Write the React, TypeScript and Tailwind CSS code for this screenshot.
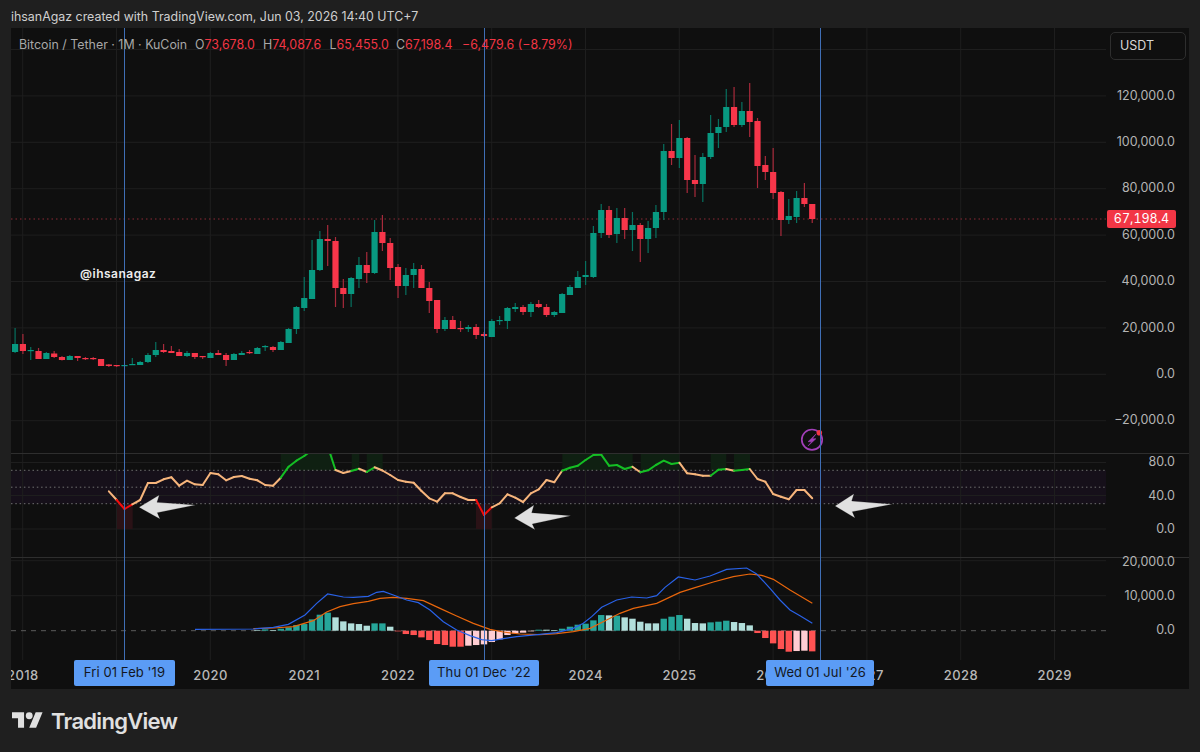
const X = (i: number) => 124.5 + (i - 14) * 7.815;

// [isGreen, bodyTop, bodyBottom, wickTop, wickBottom]
const candles: number[][] = [
  [1,344,352,328,353],[0,344,351,334,354],[1,350,351,347,360],[0,351,359,348,359],[1,353,359,352,359],
  [0,353.5,357,351,358],[0,357,360,356,360.5],[1,356,360,355,360],[0,356,358,356,361],[0,358,359,357,360],
  [0,358,359,357,360],[0,359,366,359,366],[0,364.5,366,364,367],[0,365,366,365,367],[1,365,366,365,366],
  [1,364,365,358,365],[1,362,365,361,365],[1,355,362,353,363],[1,350,355,342,357],[0,350,352,344,353],
  [0,351,353,346,353],[0,352,356,349,356],[1,353,356,351,357],[0,353,357,353,359],[0,356,357,356,359],
  [1,353,358,352,358],[0,353,355,350,355],[0,355,360,353,366],[1,354,360,353,360],[1,353,355,351,355],
  [0,352,353,350,354],[1,348,354,347,354],[1,346,347,345,351],[0,347,350,346,352],[1,342,350,341,350],
  [1,329,343,328,343],[1,307,329,306,334],[1,298,308,277,311],[1,270,299,240,299],[1,239,270,231,271],
  [0,239,241,225,266],[0,241,288,237,307],[0,288,294,279,308],[1,278,294,277,307],[1,265,279,257,288],
  [0,265,273,252,283],[1,232,273,220,274],[0,232,243,215,251],[0,243,268,238,280],[0,267,286,264,298],
  [1,275,286,268,295],[1,269,275,263,288],[0,269,288,265,288],[0,288,301,282,313],[0,300,329,300,333],
  [1,320,329,317,331],[0,320,329,316,329],[0,328,329,321,332],[1,327,329,325,332],[0,327,335,324,339],
  [0,334,336,332,337],[1,321,337,319,337],[1,320,321,316,325],[1,308,321,307,329],[1,307,309,303,312],
  [0,307,312,305,315],[1,304,312,302,317],[0,304,307,300,308],[0,307,315,304,317],[1,312,315,311,317],
  [1,294,313,293,313],[1,287,295,285,295],[1,277,288,271,288],[1,275,277,261,285],[1,233,277,226,278],
  [1,210,233,204,238],[0,210,235,206,238],[1,218,234,208,243],[0,218,230,208,239],[1,225,230,212,251],
  [0,225,239,223,262],[1,228,239,221,253],[1,212,228,205,238],[1,151,212,144,220],[0,151,158,124,165],
  [1,138,158,120,168],[0,138,180,137,193],[0,180,184,155,197],[1,157,184,153,202],[1,133,157,115,159],
  [1,127,133,119,148],[1,107,127,89,132],[0,107,125,87,127],[1,111,125,102,127],[0,111,122,83,137],
  [0,121,166,118,188],[0,165,172,156,180],[0,172,193,148,199],[0,192,220,191,236],[1,216,220,199,224],
  [1,198,217,191,223],[0,198,204,183,207],[0,204,219,204,223],
];

// RSI y values from i = 12
const rsi: number[] = [
  491.3,500,509,504.3,500,483,483,479.3,477.3,485.7,480.7,484.3,485,473,474.3,480.3,477,476,478.7,480.3,485,485.7,
  477.7,466.7,460.7,456,450,446,446,470,473,471,468.7,472,467.3,470.5,475,480,481.7,482.7,491,498.3,501.7,493.3,
  493.3,497,500,500,515,507.3,503.3,494.3,497.7,502,493.3,489.3,480,482.3,470.7,467.7,465.7,460,455,454.7,465.7,
  465,469,466.7,472.3,470.3,465,460.7,464,462.7,473.3,474.3,475.7,475.7,469.7,469,470.7,470,469,479,481.7,494,
  496.7,499.3,490,490,498.3,
];

// Histogram: bar end relative to the zero line, measured at 3x, and colour, from i = 31
const hist: [number, string][] = [
  [-2,"l"],[-4,"t"],[-2,"l"],[-6,"t"],[-10,"t"],[-17,"t"],[-20,"t"],[-34,"t"],[-48,"t"],[-54,"t"],[-40,"l"],
  [-28,"l"],[-22,"l"],[-20,"l"],[-15,"l"],[-22,"t"],[-22,"t"],[-12,"l"],[2,"r"],[10,"r"],[13,"r"],[20,"r"],[28,"r"],
  [40,"r"],[43,"r"],[48,"r"],[48,"r"],[45,"p"],[43,"p"],[41,"p"],[34,"p"],[26,"p"],[13,"p"],[8,"p"],[6,"p"],[2,"p"],
  [-3,"t"],[-3,"l"],[-2,"l"],[-6,"t"],[-12,"t"],[-18,"t"],[-21,"t"],[-31,"t"],[-47,"t"],[-46,"l"],[-45,"t"],
  [-40,"l"],[-36,"l"],[-27,"l"],[-22,"l"],[-22,"l"],[-36,"t"],[-42,"t"],[-47,"t"],[-36,"l"],[-23,"l"],[-22,"l"],
  [-25,"t"],[-27,"t"],[-30,"t"],[-26,"l"],[-23,"l"],[-16,"l"],[7,"r"],[22,"r"],[38,"r"],[55,"r"],[63,"r"],[61,"p"],
  [60,"p"],[62,"r"],
];

const histColor: Record<string, string> = { t: "#26a69a", l: "#b2dfdb", r: "#ff5252", p: "#ffcdd2" };

const z7 = (p: number[][]) => p.map(([x, y]) => `${180 + x / 3},${580 + y / 3}`).join(" ");
const z8 = (p: number[][]) => p.map(([x, y]) => `${540 + x / 3},${560 + y / 3}`).join(" ");

const macdBlue =
  z7([[45,148],[220,147],[280,142],[325,133],[375,105],[410,70],[443,42],[490,51],[520,52],[565,49],[590,37],[610,34],[640,45],[680,60],[715,68],[750,90],[790,125],[830,150],[870,167],[905,179],[935,182],[975,175],[1010,170],[1080,163]]) +
  " " +
  z8([[50,218],[100,205],[130,190],[155,170],[185,142],[230,120],[275,111],[320,114],[350,107],[375,82],[415,51],[465,60],[510,48],[560,28],[620,24],[650,42],[690,85],[720,120],[750,150],[780,167],[817,190]]);
const macdOrange =
  z7([[220,146],[280,144],[340,140],[400,122],[440,96],[480,80],[520,71],[565,64],[600,55],[640,52],[680,55],[730,62],[780,85],[830,108],[880,130],[930,148],[970,156],[1020,162],[1080,164]]) +
  " " +
  z8([[50,221],[100,215],[150,205],[200,180],[240,160],[280,145],[350,130],[420,97],[465,83],[520,66],[580,50],[630,42],[665,46],[700,58],[750,90],[817,130]]);

const yearLines = [22.7,116.5,210.3,304.1,397.9,491.7,585.5,679.3,773.1,866.9,960.7,1054.5];
const years = ["2018","","2020","2021","2022","","2024","2025","2026","2027","2028","2029"];

function YearGrid({ y1, y2 }: { y1: number; y2: number }) {
  return (
    <>
      {yearLines.map((x) => (
        <line key={x} x1={x} x2={x} y1={y1} y2={y2} stroke="#1e1e1e" strokeWidth={1} />
      ))}
    </>
  );
}

function HLines({ ys }: { ys: number[] }) {
  return (
    <>
      {ys.map((y) => (
        <line key={y} x1={11} x2={1106} y1={y} y2={y} stroke="#1e1e1e" strokeWidth={1} />
      ))}
    </>
  );
}

function MainPane() {
  return (
    <svg viewBox="11 28 1095 425" className="block w-[1095px] h-[425px] shrink-0">
      <YearGrid y1={28} y2={453} />
      <HLines ys={[49.5,95.9,142.3,188.7,235.1,281.5,327.9,374.3,420.7]} />
      <line x1={11} x2={1106} y1={219} y2={219} stroke="#8c2a36" strokeWidth={1} strokeDasharray="1.5 3" />
      {candles.map((c, i) => {
        const x = X(i);
        return (
          <g key={i}>
            <rect x={x - 0.6} y={c[3]} width={1.2} height={c[4] - c[3]} fill={c[0] ? "#07705f" : "#a82a3b"} />
            <rect x={x - 3.1} y={c[1]} width={6.2} height={Math.max(c[2] - c[1], 1.2)} fill={c[0] ? "#089981" : "#f7364a"} />
          </g>
        );
      })}
      <circle cx={812} cy={439.7} r={10.2} fill="none" stroke="#a23fb8" strokeWidth={1.7} />
      <path d="M816 434 L808 441.7 H811.6 L808 446 L816 438.7 H812.4 Z" fill="#a23fb8" stroke="#a23fb8" strokeWidth={0.5} />
      <circle cx={819.3} cy={432.7} r={2.8} fill="#f23645" />
    </svg>
  );
}

function RsiPane() {
  const pts = rsi.map((y, k) => ({ x: X(k + 12), y }));
  return (
    <svg viewBox="11 454 1095 103" className="block w-[1095px] h-[103px] shrink-0">
      <defs>
        <clipPath id="rsiclip">
          <rect x={11} y={454} width={1095} height={103} />
        </clipPath>
      </defs>
      <rect x={11} y={470.3} width={1095} height={33.4} fill="#16101a" />
      <YearGrid y1={454} y2={557} />
      <HLines ys={[462.5,495.5,529]} />
      {[[280.7,333],[351.7,359.3],[366.7,382.7],[562.3,632.7],[640.7,679.3],[710.7,726.3],[734,750]].map(([a, b]) => (
        <rect key={a} x={a} y={454} width={b - a} height={16.3} fill="#0f2012" />
      ))}
      {[[117,132.7],[476,491.7]].map(([a, b]) => (
        <rect key={a} x={a} y={504} width={b - a} height={25} fill="#2a1216" />
      ))}
      {[470.3,487.2,503.7].map((y) => (
        <line key={y} x1={11} x2={1106} y1={y} y2={y} stroke="#707070" strokeWidth={1} strokeDasharray="1.5 2.8" />
      ))}
      <g clipPath="url(#rsiclip)">
        {pts.slice(1).map((p, k) => {
          const color = p.y <= 470.4 ? "#14bf24" : p.y >= 503.7 ? "#f40d0d" : "#f7b57c";
          return (
            <line key={k} x1={pts[k].x} y1={pts[k].y} x2={p.x} y2={p.y} stroke={color} strokeWidth={2} strokeLinecap="round" />
          );
        })}
      </g>
    </svg>
  );
}

function MacdPane() {
  return (
    <svg viewBox="11 558 1095 102" className="block w-[1095px] h-[102px] shrink-0">
      <YearGrid y1={558} y2={660} />
      <HLines ys={[560.7,595.7]} />
      <line x1={11} x2={1106} y1={630.7} y2={630.7} stroke="#5c5c5c" strokeWidth={1} strokeDasharray="5 5" />
      {hist.map(([v, c], k) => {
        const x = X(k + 31);
        const h = Math.abs(v) / 3;
        const top = v < 0 ? 630.7 - h : 630.7;
        return <rect key={k} x={x - 3.2} y={top} width={6.4} height={h} fill={histColor[c]} />;
      })}
      <polyline points={macdOrange} fill="none" stroke="#e8660c" strokeWidth={1.2} />
      <polyline points={macdBlue} fill="none" stroke="#2962e8" strokeWidth={1.2} />
    </svg>
  );
}

function AxisLabels({ items, rowH }: { items: string[]; rowH: string }) {
  return (
    <>
      {items.map((t) => (
        <div key={t} className={`${rowH} flex items-center justify-end pr-[14px]`}>
          {t}
        </div>
      ))}
    </>
  );
}

function Tag({ className, text }: { className: string; text: string }) {
  return (
    <div className={`absolute top-0 h-[26px] flex items-center justify-center rounded-[2px] bg-[#5b9cf6] text-[13px] tracking-[0.1px] text-[#131722] whitespace-nowrap ${className}`}>
      {text}
    </div>
  );
}

const blue = "absolute top-0 w-[1.2px] h-[632px] bg-[#3f6eb5]";
const red = "text-[#f23645]";

export default function App() {
  return (
    <div className="w-[1200px] h-[752px] bg-[#1f1f1f] flex flex-col overflow-hidden font-['Inter','Liberation_Sans',sans-serif]">
      <div className="h-[28px] shrink-0 pt-[6px] px-[11px] flex items-center text-[12.4px] text-[#cfcfcf] whitespace-nowrap">
        ihsanAgaz created with TradingView.com, Jun 03, 2026 14:40 UTC+7
      </div>

      <div className="relative mx-[11px] w-[1178px] h-[661px] shrink-0 flex flex-col bg-[#0f0f0f] overflow-hidden">
        <div className="flex h-[426px] shrink-0 border-b border-[#2e2e2e]">
          <MainPane />
          <div className="relative flex-1 pt-[44.8px] text-[12.5px] text-[#b4b4b4]">
            <AxisLabels
              rowH="h-[46.4px]"
              items={["120,000.0","100,000.0","80,000.0","60,000.0","40,000.0","20,000.0","0.0","−20,000.0"]}
            />
            <div className="absolute left-[1px] top-[182px] w-[69px] h-[18px] flex items-center justify-center rounded-[2px] bg-[#f23645] text-[12.5px] tabular-nums text-white">
              67,198.4
            </div>
            <div className="absolute left-[4px] top-[4px] w-[76px] h-[28px] pl-[9px] flex items-center rounded-[5px] border border-[#2e2e2e] bg-[#0f0f0f] text-[12.5px] text-[#d6d6d6]">
              USDT
            </div>
          </div>
        </div>

        <div className="flex h-[104px] shrink-0 border-b border-[#2e2e2e]">
          <RsiPane />
          <div className="flex-1 -mt-[8px] text-[12.5px] text-[#b4b4b4]">
            <AxisLabels rowH="h-[33.5px]" items={["80.0","40.0","0.0"]} />
          </div>
        </div>

        <div className="flex h-[102px] shrink-0">
          <MacdPane />
          <div className="flex-1 -mt-[13px] text-[12.5px] text-[#b4b4b4]">
            <AxisLabels rowH="h-[34px]" items={["20,000.0","10,000.0","0.0"]} />
          </div>
        </div>

        <div className="relative flex-1">
          <div className="flex h-full items-center -ml-[35px] pt-[2px] text-[13px] font-medium tracking-[0.4px] text-[#b8b8b8]">
            {years.map((y, k) => (
              <div key={k} className="w-[93.8px] shrink-0 text-center">
                {y}
              </div>
            ))}
          </div>
          <Tag className="left-[63px] w-[101px]" text="Fri 01 Feb '19" />
          <Tag className="left-[418px] w-[110px]" text="Thu 01 Dec '22" />
          <Tag className="left-[755px] w-[108px]" text="Wed 01 Jul '26" />
        </div>

        <div className={`${blue} left-[113px]`} />
        <div className={`${blue} left-[472.6px]`} />
        <div className={`${blue} left-[809px]`} />

        <div className="absolute left-[8px] top-[8px] flex text-[12.4px] text-[#a8a8a8] whitespace-nowrap">
          <span className="w-[176px]">Bitcoin / Tether · 1M · KuCoin</span>
          <span className="w-[68px]">O<span className={red}>73,678.0</span></span>
          <span className="w-[66.5px]">H<span className={red}>74,087.6</span></span>
          <span className="w-[66.5px]">L<span className={red}>65,455.0</span></span>
          <span className="w-[66px]">C<span className={red}>67,198.4</span></span>
          <span className={red}>−6,479.6 (−8.79%)</span>
        </div>

        <div className="absolute left-[69px] top-[237px] text-[12px] font-semibold tracking-[0.5px] text-[#ececec]">
          @ihsanagaz
        </div>

        <svg viewBox="0 0 1178 661" className="absolute left-0 top-0 w-[1178px] h-[661px] pointer-events-none">
          <g transform="translate(-11 -28)" fill="#e0e0e0" stroke="#000" strokeOpacity={0.5} strokeWidth={0.4}>
            <polygon points="139,507.3 159.3,495 157,502.3 195.7,505 157.3,512.7 160,519" />
            <polygon points="514.3,518 534,505 531.7,512.7 571,515.7 532.3,524 535,529.7" />
            <polygon points="835,506 854,493.7 851.7,501 892.3,504.3 852.3,511.7 855,518" />
          </g>
        </svg>
      </div>

      <div className="flex-1 flex items-center gap-[8px] pl-[12px] pt-[1px] text-[#e0e0e0]">
        <svg viewBox="0 0 36 18" className="w-[31px] h-[16px] -mt-[2px]" fill="currentColor">
          <path d="M14 18H7V7H0V0h14v18zM28 18h-8l7.5-18h8L28 18z" />
          <circle cx="20" cy="4" r="4" />
        </svg>
        <span className="text-[22px] font-semibold tracking-[-0.7px] leading-none">TradingView</span>
      </div>
    </div>
  );
}
